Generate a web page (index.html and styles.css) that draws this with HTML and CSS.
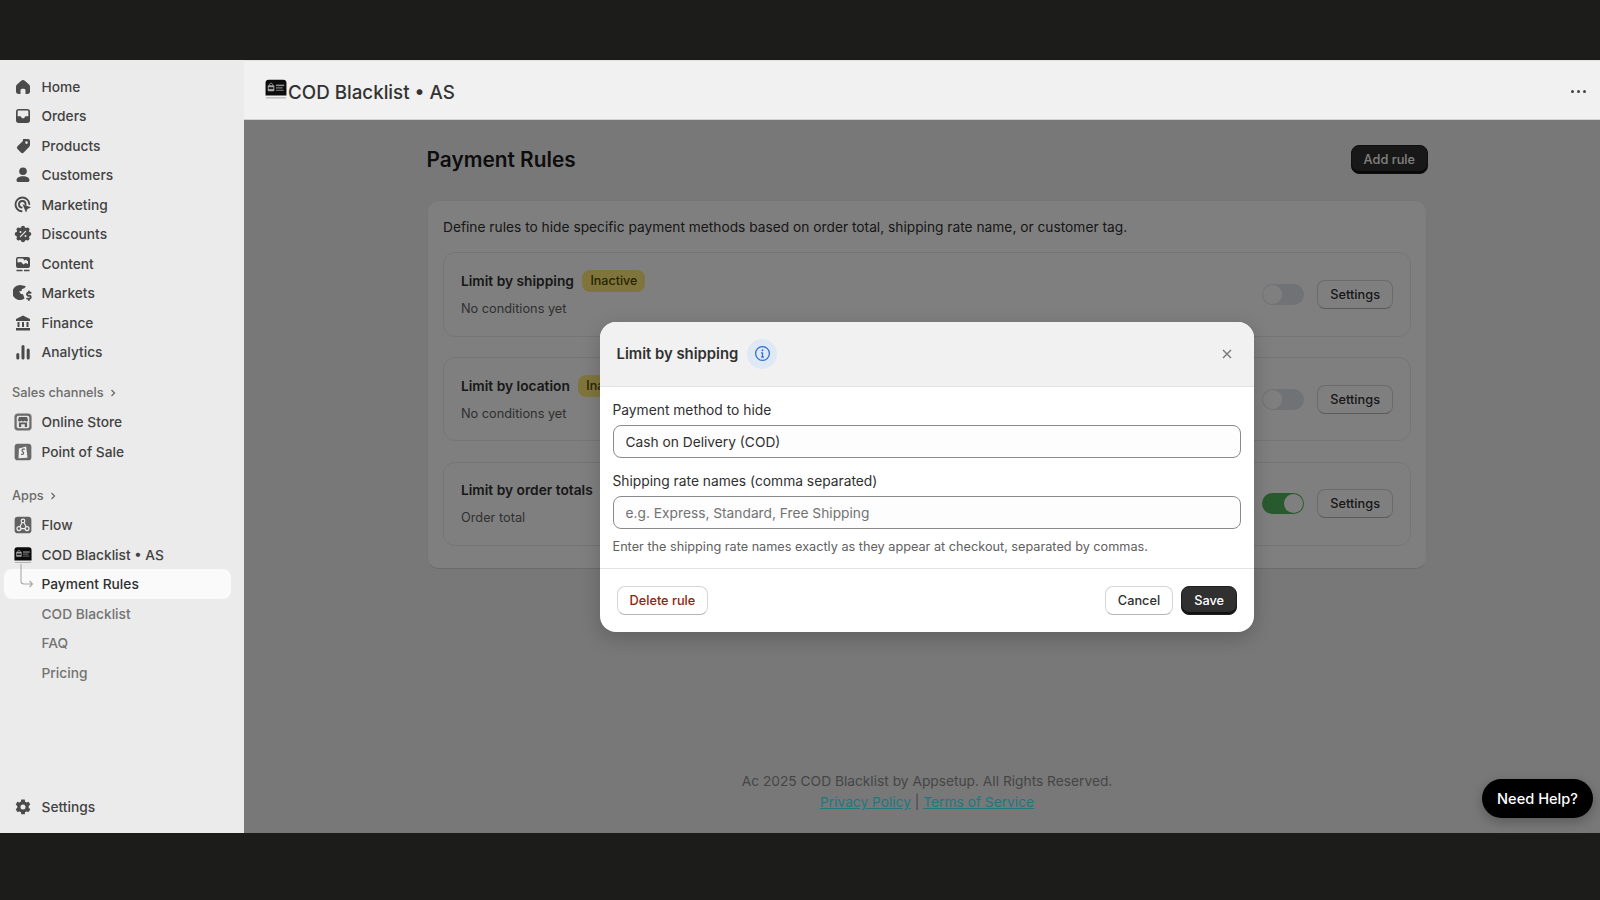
FILE: index.html
```html
<!DOCTYPE html>
<html lang="en">
<head>
<meta charset="utf-8">
<title>COD Blacklist • AS</title>
<link rel="stylesheet" href="styles.css">
</head>
<body>
<div class="topbar"></div>
<div class="shell">
  <nav class="sidebar">
    <a class="nav-item"><svg class="ico" viewBox="0 0 20 20"><path d="M8.2 3.7a2.75 2.75 0 0 1 3.6 0l4.2 3.7c.6.5 1 1.3 1 2.1v4.75A2.75 2.75 0 0 1 14.25 17H12.5v-3.75a1.5 1.5 0 0 0-1.5-1.5H9a1.5 1.5 0 0 0-1.5 1.5V17H5.75A2.75 2.75 0 0 1 3 14.25V9.5c0-.8.4-1.6 1-2.1z"/></svg>Home</a>
    <a class="nav-item"><svg class="ico" viewBox="0 0 20 20"><path fill-rule="evenodd" d="M5.75 3h8.5A2.75 2.75 0 0 1 17 5.75v8.5A2.75 2.75 0 0 1 14.25 17h-8.5A2.75 2.75 0 0 1 3 14.25v-8.5A2.75 2.75 0 0 1 5.75 3zm0 1.6c-.6 0-1.1.5-1.1 1.1v4.5h2.6c.5 0 .9.3 1 .8l.2.6c.1.4.4.6.8.6h1.5c.4 0 .7-.2.8-.6l.2-.6c.1-.5.5-.8 1-.8h2.6V5.7c0-.6-.5-1.1-1.1-1.1z"/></svg>Orders</a>
    <a class="nav-item"><svg class="ico" viewBox="0 0 20 20"><path fill-rule="evenodd" d="M11 3h4a2 2 0 0 1 2 2v4c0 .8-.3 1.5-.9 2.1l-5.4 5.4a2 2 0 0 1-2.8 0l-3.400-3.400a2 2 0 0 1 0-2.800l5.400-5.400C9.500 3.300 10.200 3 11 3zm2.500 2.300a1.300 1.300 0 1 0 0 2.600 1.300 1.300 0 0 0 0-2.600z"/></svg>Products</a>
    <a class="nav-item"><svg class="ico" viewBox="0 0 20 20"><circle cx="10" cy="6.300" r="3.800"/><path d="M3.500 15.200c0-2.400 2.600-4 6.500-4s6.500 1.600 6.500 4c0 1.100-.8 1.800-1.800 1.800H5.300c-1 0-1.800-.7-1.800-1.800z"/></svg>Customers</a>
    <a class="nav-item"><svg class="ico" viewBox="0 0 20 20"><path class="line" d="M8.500 16.300a6.900 6.900 0 1 1 7.800-7.300"/><path class="line" d="M8.700 12.600a3.300 3.300 0 1 1 3.900-3.200"/><path d="M9.500 9.300l8.500 3-3.500 1.600L13 17.500z"/></svg>Marketing</a>
    <a class="nav-item"><svg class="ico" viewBox="0 0 20 20"><circle cx="10" cy="10" r="6.800"/><circle cx="10" cy="3.700" r="2"/><circle cx="10" cy="16.300" r="2"/><circle cx="3.700" cy="10" r="2"/><circle cx="16.300" cy="10" r="2"/><circle cx="5.500" cy="5.500" r="2"/><circle cx="14.500" cy="5.500" r="2"/><circle cx="5.500" cy="14.500" r="2"/><circle cx="14.500" cy="14.500" r="2"/><path class="cut" d="M7.400 12.600l5.200-5.200"/><circle class="cut-dot" cx="7.500" cy="7.900" r="1"/><circle class="cut-dot" cx="12.500" cy="12.100" r="1"/></svg>Discounts</a>
    <a class="nav-item"><svg class="ico" viewBox="0 0 20 20"><path fill-rule="evenodd" d="M5 3h10a2 2 0 0 1 2 2v7a2 2 0 0 1-2 2H5a2 2 0 0 1-2-2V5a2 2 0 0 1 2-2zm-.5 5.500V5c0-.3.2-.5.5-.5h5l1.500 2 1.500-1 1.500 1.500h.5v3l-2.500-1-2 1.500-2.500-2.500z"/><path d="M3.500 15.700h6v1.500h-6zM11 15.700h5.500v1.500H11z"/></svg>Content</a>
    <a class="nav-item"><svg class="ico" viewBox="0 0 20 20"><path d="M9.500 2.500c1.200 0 2.300.3 3.300.8l-1.300 2-2.500.7-.5 2-2.500.5 2 2.500 2 .3.800 2 .7 2.200a7.500 7.500 0 1 1-2-13z"/><path class="line" d="M17.600 9.800h-2.100a1.400 1.400 0 0 0 0 2.900h.8a1.400 1.400 0 0 1 0 2.900h-2.200M15.900 8.400v1.400M15.900 15.600V17"/></svg>Markets</a>
    <a class="nav-item"><svg class="ico" viewBox="0 0 20 20"><path d="M10 2.500l7 3.400v2.100H3V5.900zM4.500 9h2v5h-2zM9 9h2v5H9zM13.500 9h2v5h-2zM3 15h14v2.500H3z"/></svg>Finance</a>
    <a class="nav-item"><svg class="ico" viewBox="0 0 20 20"><rect x="3.300" y="11" width="3" height="6.500" rx="1.500"/><rect x="8.500" y="3" width="3" height="14.500" rx="1.500"/><rect x="13.700" y="6.500" width="3" height="11" rx="1.500"/></svg>Analytics</a>

    <div class="nav-label nav-label-first">Sales channels <svg class="chev" viewBox="0 0 10 10"><path d="M3.500 2l3 3-3 3"/></svg></div>
    <a class="nav-item"><svg class="ico-app" viewBox="0 0 20 20"><rect x=".7" y=".7" width="18.600" height="18.600" rx="3.500" fill="#6a6a6a" stroke="#8a8a8a" stroke-width=".6"/><rect x="3" y="3" width="14" height="14" rx="2" fill="#e4e4e4"/><path d="M5.500 4.500h9l1 3.500c0 1-.8 1.500-1.500 1.500-.8 0-1.500-.5-2-1-.5.500-1.200 1-2 1s-1.500-.5-2-1c-.5.500-1.200 1-2 1-.7 0-1.500-.5-1.500-1.500zM5.500 10.500h9v5h-2.500v-3h-4v3H5.500z" fill="#5c5c5c"/></svg>Online Store</a>
    <a class="nav-item"><svg class="ico-app" viewBox="0 0 20 20"><rect x=".7" y=".7" width="18.600" height="18.600" rx="3.500" fill="#6a6a6a"/><path d="M5.500 6l8-2 1.500 12.500-10 .5z" fill="#efefef"/><path d="M12 6.800h-1.800c-1.500 0-1.800 2.200-.5 2.900.9.500 1.300 1.200.6 2.400-.5.800-1.500.6-2.300.3" fill="none" stroke="#5c5c5c" stroke-width="1.300"/></svg>Point of Sale</a>

    <div class="nav-label nav-label-apps">Apps <svg class="chev" viewBox="0 0 10 10"><path d="M3.500 2l3 3-3 3"/></svg></div>
    <a class="nav-item"><svg class="ico-app" viewBox="0 0 20 20"><rect x=".7" y=".7" width="18.600" height="18.600" rx="3.500" fill="#626262"/><g fill="none" stroke="#f0f0f0" stroke-width="1.300"><circle cx="10" cy="5.500" r="2"/><circle cx="5.500" cy="14" r="2.200"/><circle cx="14.500" cy="14" r="2.200"/><path d="M9 7.300L6.500 12M11 7.300l2.500 4.700M7.700 14h4.600"/></g></svg>Flow</a>
    <a class="nav-item"><svg class="ico-app" viewBox="0 0 20 20"><use href="#app-logo"/></svg>COD Blacklist • AS</a>
    <a class="nav-item nav-sub nav-active"><svg class="tree" viewBox="0 0 18 24"><path d="M6 0v17c0 2 1 3 3 3h8.500M14.500 17l3 3-3 3"/></svg>Payment Rules</a>
    <a class="nav-item nav-sub">COD Blacklist</a>
    <a class="nav-item nav-sub">FAQ</a>
    <a class="nav-item nav-sub">Pricing</a>

    <a class="nav-item nav-settings"><svg class="ico" viewBox="0 0 20 20"><path fill-rule="evenodd" d="M8.300 2.500h3.400l.5 2.200 1.300.7 2.100-.7 1.700 2.900-1.600 1.500v1.600l1.600 1.500-1.700 2.900-2.100-.7-1.300.7-.5 2.200H8.300l-.5-2.200-1.300-.7-2.100.7-1.700-2.900 1.600-1.500V9.100L2.700 7.600l1.700-2.900 2.100.7 1.300-.7zM10 7.500a2.500 2.500 0 1 0 0 5 2.500 2.500 0 0 0 0-5z"/></svg>Settings</a>
  </nav>

  <div class="workspace">
    <header class="app-header">
      <svg class="logo" viewBox="0 0 20 20"><defs><g id="app-logo"><path d="M3.500 1.500h13a3 3 0 0 1 3 3V16H.5V4.500a3 3 0 0 1 3-3z" fill="#0c0c0c"/><rect x="2.500" y="6.500" width="6" height="5.500" rx=".6" fill="#a8a8a8"/><path d="M4 6.500c0-2.300 3-2.300 3 0" fill="none" stroke="#a8a8a8" stroke-width=".8"/><rect x="3.300" y="8.300" width="4.400" height="1.800" fill="#222"/><rect x="10" y="6" width="7.500" height="1.400" fill="#8c8c8c"/><rect x="10" y="8.400" width="6" height="1.200" fill="#777"/><rect x="10" y="10.700" width="7" height="1.100" fill="#666"/><rect x="1" y="17.700" width="18" height=".8" fill="#9a9a9a"/></g></defs><use href="#app-logo"/></svg>
      <h1 class="app-title">COD Blacklist • AS</h1>
      <div class="dots"><i></i><i></i><i></i></div>
    </header>

    <main class="content">
      <div class="page">
        <div class="page-head">
          <h2 class="page-title">Payment Rules</h2>
          <button class="btn btn-dark btn-add">Add rule</button>
        </div>
        <section class="card">
          <p class="card-intro">Define rules to hide specific payment methods based on order total, shipping rate name, or customer tag.</p>
          <div class="rule">
            <div class="rule-info">
              <div class="rule-head"><span class="rule-name">Limit by shipping</span><span class="badge">Inactive</span></div>
              <div class="rule-sub">No conditions yet</div>
            </div>
            <span class="toggle"></span>
            <button class="btn">Settings</button>
          </div>
          <div class="rule">
            <div class="rule-info">
              <div class="rule-head"><span class="rule-name">Limit by location</span><span class="badge">Inactive</span></div>
              <div class="rule-sub">No conditions yet</div>
            </div>
            <span class="toggle"></span>
            <button class="btn">Settings</button>
          </div>
          <div class="rule">
            <div class="rule-info">
              <div class="rule-head"><span class="rule-name">Limit by order totals</span></div>
              <div class="rule-sub">Order total</div>
            </div>
            <span class="toggle toggle-on"></span>
            <button class="btn">Settings</button>
          </div>
        </section>
        <footer class="foot">
          <div>Ac 2025 COD Blacklist by Appsetup. All Rights Reserved.</div>
          <div><a class="foot-link">Privacy Policy</a> | <a class="foot-link">Terms of Service</a></div>
        </footer>
      </div>

      <div class="overlay">
        <div class="modal">
          <div class="modal-head">
            <span class="modal-title">Limit by shipping</span>
            <span class="info-chip"><svg class="info" viewBox="0 0 16 16"><circle cx="8" cy="8" r="6.500"/><circle class="info-dot" cx="8" cy="5" r=".9"/><path d="M8 7.300v4M6.800 7.300H8M6.800 11.300h2.400"/></svg></span>
            <svg class="close" viewBox="0 0 12 12"><path d="M2 2l8 8M10 2l-8 8"/></svg>
          </div>
          <div class="modal-body">
            <label class="field-label">Payment method to hide</label>
            <input class="field" value="Cash on Delivery (COD)">
            <label class="field-label field-label-2">Shipping rate names (comma separated)</label>
            <input class="field" placeholder="e.g. Express, Standard, Free Shipping">
            <p class="help">Enter the shipping rate names exactly as they appear at checkout, separated by commas.</p>
          </div>
          <div class="modal-foot">
            <button class="btn btn-danger">Delete rule</button>
            <button class="btn btn-cancel">Cancel</button>
            <button class="btn btn-dark btn-save">Save</button>
          </div>
        </div>
      </div>
      <button class="help-fab">Need Help?</button>
    </main>
  </div>
</div>
<div class="bottombar"></div>
</body>
</html>
```

FILE: styles.css
```css
* { box-sizing: border-box; }
html, body { margin: 0; height: 100%; }
body {
  font-family: Inter, "Liberation Sans", sans-serif;
  font-size: 13.75px;
  color: #303030;
  background: #1c1c1b;
  display: flex;
  flex-direction: column;
  height: 900px;
  overflow: hidden;
}
.topbar { height: 60px; flex: none; background: #1c1c1b; }
.bottombar { height: 67px; flex: none; background: #1c1c1b; }
.shell { height: 773px; flex: none; display: flex; }

/* sidebar */
.sidebar {
  width: 244px;
  flex: none;
  background: #ebebeb;
  padding: 12px 0 11px 4px;
  display: flex;
  flex-direction: column;
}
.nav-item {
  height: 29.5px;
  flex: none;
  width: 227px;
  display: flex;
  align-items: center;
  gap: 8px;
  padding-left: 11px;
  font-size: 13.75px;
  font-weight: 450;
  color: #424242;
  border-radius: 8px;
  position: relative;
}
.ico { width: 20px; height: 20px; flex: none; fill: #4a4a4a; margin-left: -2px; margin-right: .5px; }
.ico .line { fill: none; stroke: #4a4a4a; stroke-width: 1.9; stroke-linecap: round; }
.ico .cut { fill: none; stroke: #ebebeb; stroke-width: 1.2; stroke-linecap: round; }
.ico .cut-dot { fill: #ebebeb; }
.ico-app { width: 18px; height: 18px; flex: none; margin-left: -1px; margin-right: 1.5px; }
.nav-label {
  height: 29.5px;
  flex: none;
  display: flex;
  align-items: center;
  gap: 4px;
  padding-left: 8px;
  font-size: 12.75px;
  font-weight: 450;
  color: #6b6b6b;
}
.nav-label-first { margin-top: 11px; }
.nav-label-apps { margin-top: 14.3px; }
.chev { width: 10px; height: 10px; fill: none; stroke: #6b6b6b; stroke-width: 1.3; }
.nav-sub { padding-left: 37.5px; color: #737373; }
.nav-active { background: #fafafa; color: #303030; font-weight: 550; }
.tree {
  position: absolute;
  left: 11.3px;
  top: -5px;
  width: 18px;
  height: 24px;
  fill: none;
  stroke: #a8a8a8;
  stroke-width: 1.1;
}
.nav-settings { margin-top: auto; }

/* workspace */
.workspace { flex: 1; min-width: 0; display: flex; flex-direction: column; }
.app-header {
  height: 60px;
  flex: none;
  background: #f1f1f1;
  border-top: 1px solid #e3e3e3;
  border-bottom: 1px solid #d2d2d2;
  display: flex;
  align-items: center;
  padding: 0 14px 0 21px;
}
.logo { width: 22px; height: 22px; flex: none; margin-top: -2px; margin-right: 1px; }
.app-title { margin: 0; padding-top: 4px; font-size: 18.75px; font-weight: 500; color: #333; }
.dots { margin-left: auto; margin-top: 3px; display: flex; gap: 2.5px; }
.dots i { width: 3.5px; height: 3.5px; border-radius: 50%; background: #444; }

.content { flex: 1; position: relative; background: #f1f1f1; overflow: hidden; }
.page { padding: 25px 173px 0 183px; display: flex; flex-direction: column; height: 100%; }
.page-head { display: flex; align-items: center; justify-content: space-between; height: 29px; }
.page-title { margin: 0; margin-left: -.5px; font-size: 20.85px; font-weight: 600; color: #1a1a1a; }
.btn {
  font-family: inherit;
  font-size: 12.75px;
  font-weight: 550;
  color: #303030;
  height: 29px;
  padding: 0 12px;
  background: #fff;
  border: 1px solid #d6d6d6;
  border-bottom-color: #b5b5b5;
  border-radius: 8px;
  flex: none;
}
.btn-dark {
  color: #fff;
  background: #303030;
  border-color: #1f1f1f;
  box-shadow: inset 0 -2px 0 #111;
}
.btn-add { margin-right: -.5px; padding: 0 11.5px; }
.card {
  margin-top: 26px;
  height: 369px;
  background: #fff;
  border: 1px solid #ededed;
  border-bottom-color: #d9d9d9;
  border-radius: 12px;
  padding: 16px 15px;
  display: flex;
  flex-direction: column;
}
.card-intro { margin: 0; font-size: 13.75px; line-height: 20px; color: #303030; }
.rule {
  width: 968px;
  height: 84.5px;
  flex: none;
  border: 1px solid #ebebeb;
  border-radius: 12px;
  padding: 0 17px;
  display: flex;
  align-items: center;
}
.card-intro + .rule { margin-top: 15px; }
.rule + .rule { margin-top: 20.25px; }
.rule-info { flex: 1; }
.rule-head { display: flex; align-items: center; gap: 8.5px; height: 22px; }
.rule-name { font-weight: 600; font-size: 13.75px; color: #303030; }
.badge {
  font-size: 12.5px;
  font-weight: 500;
  color: #4f4700;
  background: #ffeb78;
  height: 22px;
  border-radius: 8px;
  padding: 0 8px;
  display: flex;
  align-items: center;
}
.rule-sub { margin-top: 7px; color: #616161; font-size: 12.75px; line-height: 20px; }
.toggle {
  width: 42px;
  height: 21px;
  border-radius: 11px;
  background: #e3e5ec;
  position: relative;
  margin-right: 13.5px;
  flex: none;
}
.toggle::after {
  content: "";
  position: absolute;
  left: 1px;
  top: 1px;
  width: 19px;
  height: 19px;
  border-radius: 50%;
  background: #fff;
}
.toggle-on { background: #52b55a; }
.toggle-on::after { left: auto; right: 1px; }

.foot { margin-top: 202px; text-align: center; color: #8c8c8c; font-size: 13.75px; line-height: 21px; }
.foot-link { color: #3ff0ff; text-decoration: underline; }

/* modal */
.overlay {
  position: absolute;
  inset: 0;
  background: rgba(0, 0, 0, .5);
  display: flex;
  align-items: center;
  justify-content: center;
  padding-left: 9px;
}
.modal {
  width: 654px;
  height: 310px;
  background: #fff;
  border-radius: 16px;
  overflow: hidden;
  display: flex;
  flex-direction: column;
  box-shadow: 0 6px 20px rgba(0, 0, 0, .2);
}
.modal-head {
  height: 65px;
  flex: none;
  background: #f1f1f1;
  border-bottom: 1px solid #e3e3e3;
  display: flex;
  align-items: center;
  padding: 0 21px 0 17px;
}
.modal-title { font-size: 14.85px; font-weight: 600; color: #303030; }
.info-chip {
  width: 30px;
  height: 30px;
  margin-left: 9px;
  border-radius: 50%;
  background: #dfe8f5;
  display: flex;
  align-items: center;
  justify-content: center;
}
.info { width: 17px; height: 17px; fill: none; stroke: #2c6ecb; stroke-width: 1.2; }
.info-dot { fill: #2c6ecb; stroke: none; }
.close { width: 12px; height: 12px; margin-left: auto; fill: none; stroke: #777; stroke-width: 1.4; }
.modal-body { flex: 1; padding: 13px 12.5px 0 13px; }
.field-label { display: block; font-size: 13.8px; line-height: 20px; color: #303030; margin-bottom: 5px; }
.field-label-2 { margin-top: 13px; }
.field {
  display: block;
  width: 100%;
  height: 33px;
  padding: 1px 12px 0;
  font-family: inherit;
  font-size: 13.75px;
  color: #303030;
  background: #fdfdfd;
  border: 1px solid #8a8a8a;
  border-radius: 8px;
}
.field::placeholder { color: #737373; opacity: 1; }
.help { margin: 9.5px 0 0; font-size: 12.7px; line-height: 18px; color: #616161; }
.modal-foot {
  height: 64px;
  flex: none;
  border-top: 1px solid #e3e3e3;
  display: flex;
  align-items: center;
  padding: 0 16.5px 0 17px;
  gap: 8px;
}
.btn-danger { color: #8e1f0b; margin-right: auto; padding: 0 11.5px 0 12px; }
.btn-cancel { color: #303030; }
.help-fab {
  position: absolute;
  right: 7px;
  bottom: 15px;
  width: 111px;
  height: 39px;
  border: 0;
  border-radius: 20px;
  background: #000;
  color: #fff;
  font-family: inherit;
  font-size: 14.6px;
  font-weight: 500;
  box-shadow: 0 4px 12px rgba(0, 0, 0, .25);
  padding: 0;
}
```
